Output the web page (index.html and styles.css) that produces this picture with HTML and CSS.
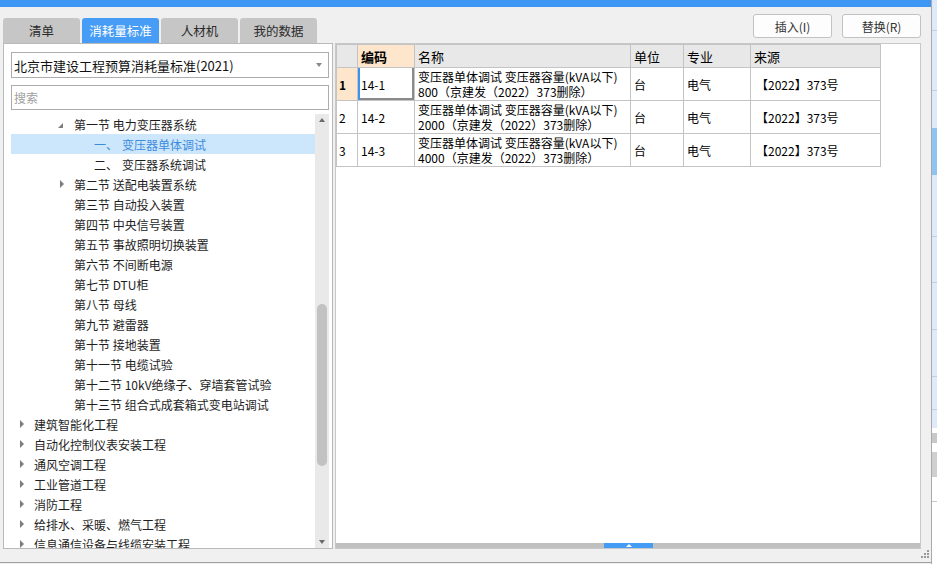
FILE: index.html
```html
<!DOCTYPE html>
<html lang="zh">
<head>
<meta charset="utf-8">
<title>消耗量标准</title>
<link rel="stylesheet" href="styles.css">
</head>
<body>
<div class="app">
  <div class="topbar"></div>
  <div class="workspace">
    <div class="left">
      <div class="tabs">
        <div class="tab">清单</div>
        <div class="tab active">消耗量标准</div>
        <div class="tab">人材机</div>
        <div class="tab">我的数据</div>
      </div>
      <div class="side">
        <div class="select"><span>北京市建设工程预算消耗量标准(2021)</span><i class="caret"></i></div>
        <div class="search">搜索</div>
        <div class="tree">
          <div class="tree-list">
            <div class="node l2"><i class="tw open"></i>第一节 电力变压器系统</div>
            <div class="node l3 sel"><span class="num">一、</span>变压器单体调试</div>
            <div class="node l3"><span class="num">二、</span>变压器系统调试</div>
            <div class="node l2"><i class="tw closed"></i>第二节 送配电装置系统</div>
            <div class="node l2"><i class="tw"></i>第三节 自动投入装置</div>
            <div class="node l2"><i class="tw"></i>第四节 中央信号装置</div>
            <div class="node l2"><i class="tw"></i>第五节 事故照明切换装置</div>
            <div class="node l2"><i class="tw"></i>第六节 不间断电源</div>
            <div class="node l2"><i class="tw"></i>第七节 DTU柜</div>
            <div class="node l2"><i class="tw"></i>第八节 母线</div>
            <div class="node l2"><i class="tw"></i>第九节 避雷器</div>
            <div class="node l2"><i class="tw"></i>第十节 接地装置</div>
            <div class="node l2"><i class="tw"></i>第十一节 电缆试验</div>
            <div class="node l2"><i class="tw"></i>第十二节 10kV绝缘子、穿墙套管试验</div>
            <div class="node l2"><i class="tw"></i>第十三节 组合式成套箱式变电站调试</div>
            <div class="node l0"><i class="tw closed"></i>建筑智能化工程</div>
            <div class="node l0"><i class="tw closed"></i>自动化控制仪表安装工程</div>
            <div class="node l0"><i class="tw closed"></i>通风空调工程</div>
            <div class="node l0"><i class="tw closed"></i>工业管道工程</div>
            <div class="node l0"><i class="tw closed"></i>消防工程</div>
            <div class="node l0"><i class="tw closed"></i>给排水、采暖、燃气工程</div>
            <div class="node l0"><i class="tw closed"></i>信息通信设备与线缆安装工程</div>
          </div>
          <div class="vscroll">
            <div class="vs-btn"><i class="up"></i></div>
            <div class="vs-thumb"></div>
            <div class="vs-btn bottom"><i class="down"></i></div>
          </div>
        </div>
      </div>
    </div>
    <div class="right">
      <div class="actions">
        <div class="btn">插入(I)</div>
        <div class="btn">替换(R)</div>
      </div>
      <div class="grid-panel">
        <div class="grid-body">
          <table class="grid">
            <colgroup>
              <col class="c-rh"><col class="c-code"><col class="c-name"><col class="c-unit"><col class="c-major"><col class="c-src">
            </colgroup>
            <thead>
              <tr><th class="rh"></th><th class="hl">编码</th><th>名称</th><th>单位</th><th>专业</th><th>来源</th></tr>
            </thead>
            <tbody>
              <tr><td class="rh act">1</td><td class="sel">14-1</td><td class="name"><span class="ln">变压器单体调试 变压器容量(kVA以下)</span><span class="ln">800（京建发（2022）373删除）</span></td><td>台</td><td>电气</td><td class="src">【2022】373号</td></tr>
              <tr><td class="rh">2</td><td>14-2</td><td class="name"><span class="ln">变压器单体调试 变压器容量(kVA以下)</span><span class="ln">2000（京建发（2022）373删除）</span></td><td>台</td><td>电气</td><td class="src">【2022】373号</td></tr>
              <tr><td class="rh">3</td><td>14-3</td><td class="name"><span class="ln">变压器单体调试 变压器容量(kVA以下)</span><span class="ln">4000（京建发（2022）373删除）</span></td><td>台</td><td>电气</td><td class="src">【2022】373号</td></tr>
            </tbody>
          </table>
        </div>
        <div class="hscroll"><div class="hs-thumb"><i></i></div></div>
      </div>
    </div>
  </div>
  <div class="status">
    <svg class="grip" width="8" height="8" viewBox="0 0 8 8">
      <rect x="6" y="0" width="2" height="2"/>
      <rect x="3" y="3" width="2" height="2"/><rect x="6" y="3" width="2" height="2"/>
      <rect x="0" y="6" width="2" height="2"/><rect x="3" y="6" width="2" height="2"/><rect x="6" y="6" width="2" height="2"/>
    </svg>
  </div>
</div>
<div class="edge">
  <div class="seg s1"></div>
  <div class="seg s2"></div>
  <div class="seg s3"></div>
  <div class="seg hi"></div>
  <div class="seg s4"></div>
  <div class="seg s5"></div>
  <div class="seg s6"></div>
  <div class="seg s7"></div>
  <div class="seg s8"></div>
  <div class="seg s9"></div>
  <div class="seg w1"></div>
  <div class="seg g1"></div>
  <div class="seg w2"></div>
  <div class="seg g2"></div>
  <div class="seg w3"></div>
  <div class="seg w4"></div>
</div>
</body>
</html>
```
FILE: styles.css
```css
* { box-sizing: border-box; }
html, body { margin: 0; padding: 0; }
body {
  width: 937px;
  height: 564px;
  overflow: hidden;
  display: flex;
  background: #f0f0f0;
  font-family: "Noto Sans CJK SC", "Microsoft YaHei", sans-serif;
  font-size: 12px;
  color: #1e1e1e;
}
.app {
  width: 932px;
  height: 564px;
  display: flex;
  flex-direction: column;
  border-right: 1px solid #a9a9a9;
  flex: none;
}
.topbar { height: 7px; background: #3f97f5; flex: none; }
.workspace { flex: 1; display: flex; min-height: 0; }

/* left column */
.left { width: 333px; flex: none; padding-left: 3px; display: flex; flex-direction: column; }
.tabs { display: flex; gap: 2px; margin-top: 11px; height: 25px; flex: none; }
.tab {
  width: 77px;
  background: #c6c6c6;
  border-radius: 3px 3px 0 0;
  display: flex;
  align-items: center;
  justify-content: center;
  font-size: 12.5px;
  color: #2b2b2b;
}
.tab.active { background: #479df5; color: #fff; }
.side {
  flex: 1;
  min-height: 0;
  background: #fff;
  border: 1px solid #b9b9b9;
  padding: 8px 3px 0 7px;
  display: flex;
  flex-direction: column;
}
.select {
  height: 26px;
  flex: none;
  border: 1px solid #adadad;
  display: flex;
  align-items: center;
  justify-content: space-between;
  padding: 0 6px 0 2px;
  font-size: 13px;
  color: #111;
}
.caret { width: 0; height: 0; border-top: 4px solid #8a8a8a; border-left: 3.5px solid transparent; border-right: 3.5px solid transparent; }
.search {
  height: 25px;
  flex: none;
  margin-top: 7px;
  border: 1px solid #adadad;
  padding-left: 2px;
  display: flex;
  align-items: center;
  color: #a0a0a0;
  font-size: 12px;
}
.tree { flex: 1; min-height: 0; margin-top: 4px; display: flex; }
.tree-list { flex: 1; overflow: hidden; }
.node { height: 20px; display: flex; align-items: center; white-space: nowrap; color: #1e1e1e; }
.node.l0 { padding-left: 9px; }
.node.l2 { padding-left: 49px; }
.node.l3 { padding-left: 83px; }
.node.sel { background: #cce6fb; color: #3d8be0; }
.num { display: inline-block; width: 28px; }
.tw { width: 14px; flex: none; display: flex; align-items: center; height: 10px; }
.tw.closed::before { content: ""; border-left: 4px solid #7d7d7d; border-top: 4px solid transparent; border-bottom: 4px solid transparent; }
.tw.open::before { content: ""; margin-left: -2px; margin-top: 2px; border-bottom: 5px solid #7d7d7d; border-left: 5px solid transparent; }
.vscroll { width: 14px; flex: none; background: #e9e9e9; display: flex; flex-direction: column; align-items: center; }
.vs-btn { height: 12px; width: 14px; display: flex; align-items: center; justify-content: center; flex: none; }
.vs-btn.bottom { margin-top: auto; }
.up { border-bottom: 4px solid #6a6a6a; border-left: 3.5px solid transparent; border-right: 3.5px solid transparent; }
.down { border-top: 4px solid #6a6a6a; border-left: 3.5px solid transparent; border-right: 3.5px solid transparent; }
.vs-thumb { width: 10px; height: 162px; margin-top: 178px; border-radius: 5px; background: #c2c2c2; flex: none; }

/* right column */
.right { flex: 1; min-width: 0; display: flex; flex-direction: column; padding: 0 10px 0 2px; }
.actions { display: flex; justify-content: flex-end; gap: 10px; margin-top: 7px; height: 24px; flex: none; }
.btn {
  width: 79px;
  border: 1px solid #c2c2c2;
  border-radius: 3px;
  background: #fdfdfd;
  display: flex;
  align-items: center;
  justify-content: center;
  font-size: 12px;
  color: #333;
}
.grid-panel {
  flex: 1;
  min-height: 0;
  margin-top: 5px;
  background: #fff;
  border: 1px solid #c8c8c8;
  display: flex;
  flex-direction: column;
}
.grid-body { flex: 1; overflow: hidden; }
.grid { border-collapse: collapse; table-layout: fixed; width: 545px; font-size: 12px; color: #000; }
.c-rh { width: 21px; }
.c-code { width: 57px; }
.c-name { width: 216px; }
.c-unit { width: 53px; }
.c-major { width: 67px; }
.c-src { width: 130px; }
.grid th, .grid td {
  border: 1px solid #c4c4c4;
  padding: 0 3px;
  text-align: left;
  white-space: nowrap;
  overflow: hidden;
  vertical-align: middle;
}
.grid th { height: 23px; background: #e8e8e8; font-weight: normal; font-size: 13px; }
.grid th.hl { background: #fde6cb; font-weight: bold; }
.grid td { height: 33px; }
.grid .rh { padding-left: 2px; }
.grid td.act { background: #fde6cb; font-weight: bold; }
.grid .name { line-height: 16px; }
.grid .ln { display: block; height: 15px; line-height: 15px; }
.grid .src { padding-left: 5px; }
.grid .sel { box-shadow: inset 2px 0 0 #3f93f0, inset -2px -2px 0 #8a8a8a; }
.hscroll { height: 5px; flex: none; background: #c0c0c0; }
.hs-thumb { margin-left: 268px; width: 49px; height: 5px; background: #459cf5; display: flex; justify-content: center; align-items: center; }
.hs-thumb i { border-bottom: 3px solid #fff; border-left: 3px solid transparent; border-right: 3px solid transparent; }

/* status bar */
.status {
  height: 14px;
  margin-bottom: 1px;
  flex: none;
  border-bottom: 1px solid #a0a0a0;
  display: flex;
  justify-content: flex-end;
  align-items: flex-start;
  padding: 1px 2px 0 0;
}
.grip { fill: #9a9a9a; }

/* partial neighbouring window at the edge */
.edge { width: 5px; flex: none; background: #dfe9fa; display: flex; flex-direction: column; }
.seg { flex: none; border-bottom: 1px solid #c3cede; }
.s1 { height: 31px; }
.s2 { height: 60px; }
.s3 { height: 37px; border-bottom: none; }
.hi { height: 47px; background: #8ec3f3; border-bottom: none; }
.s4 { height: 62px; }
.s5 { height: 46px; }
.s6 { height: 47px; }
.s7 { height: 47px; }
.s8 { height: 33px; }
.s9 { height: 18px; border-bottom: none; }
.w1 { height: 5px; background: #fff; border-bottom: none; }
.g1 { height: 10px; background: #c8c8c8; border-bottom: none; }
.w2 { height: 9px; background: #fff; border-bottom: none; }
.g2 { height: 25px; background: #cfcfcf; border-bottom: none; }
.w3 { height: 25px; background: #fff; border-bottom: 1px solid #c8c8c8; }
.w4 { flex: 1; background: #fff; border-bottom: none; }
```
